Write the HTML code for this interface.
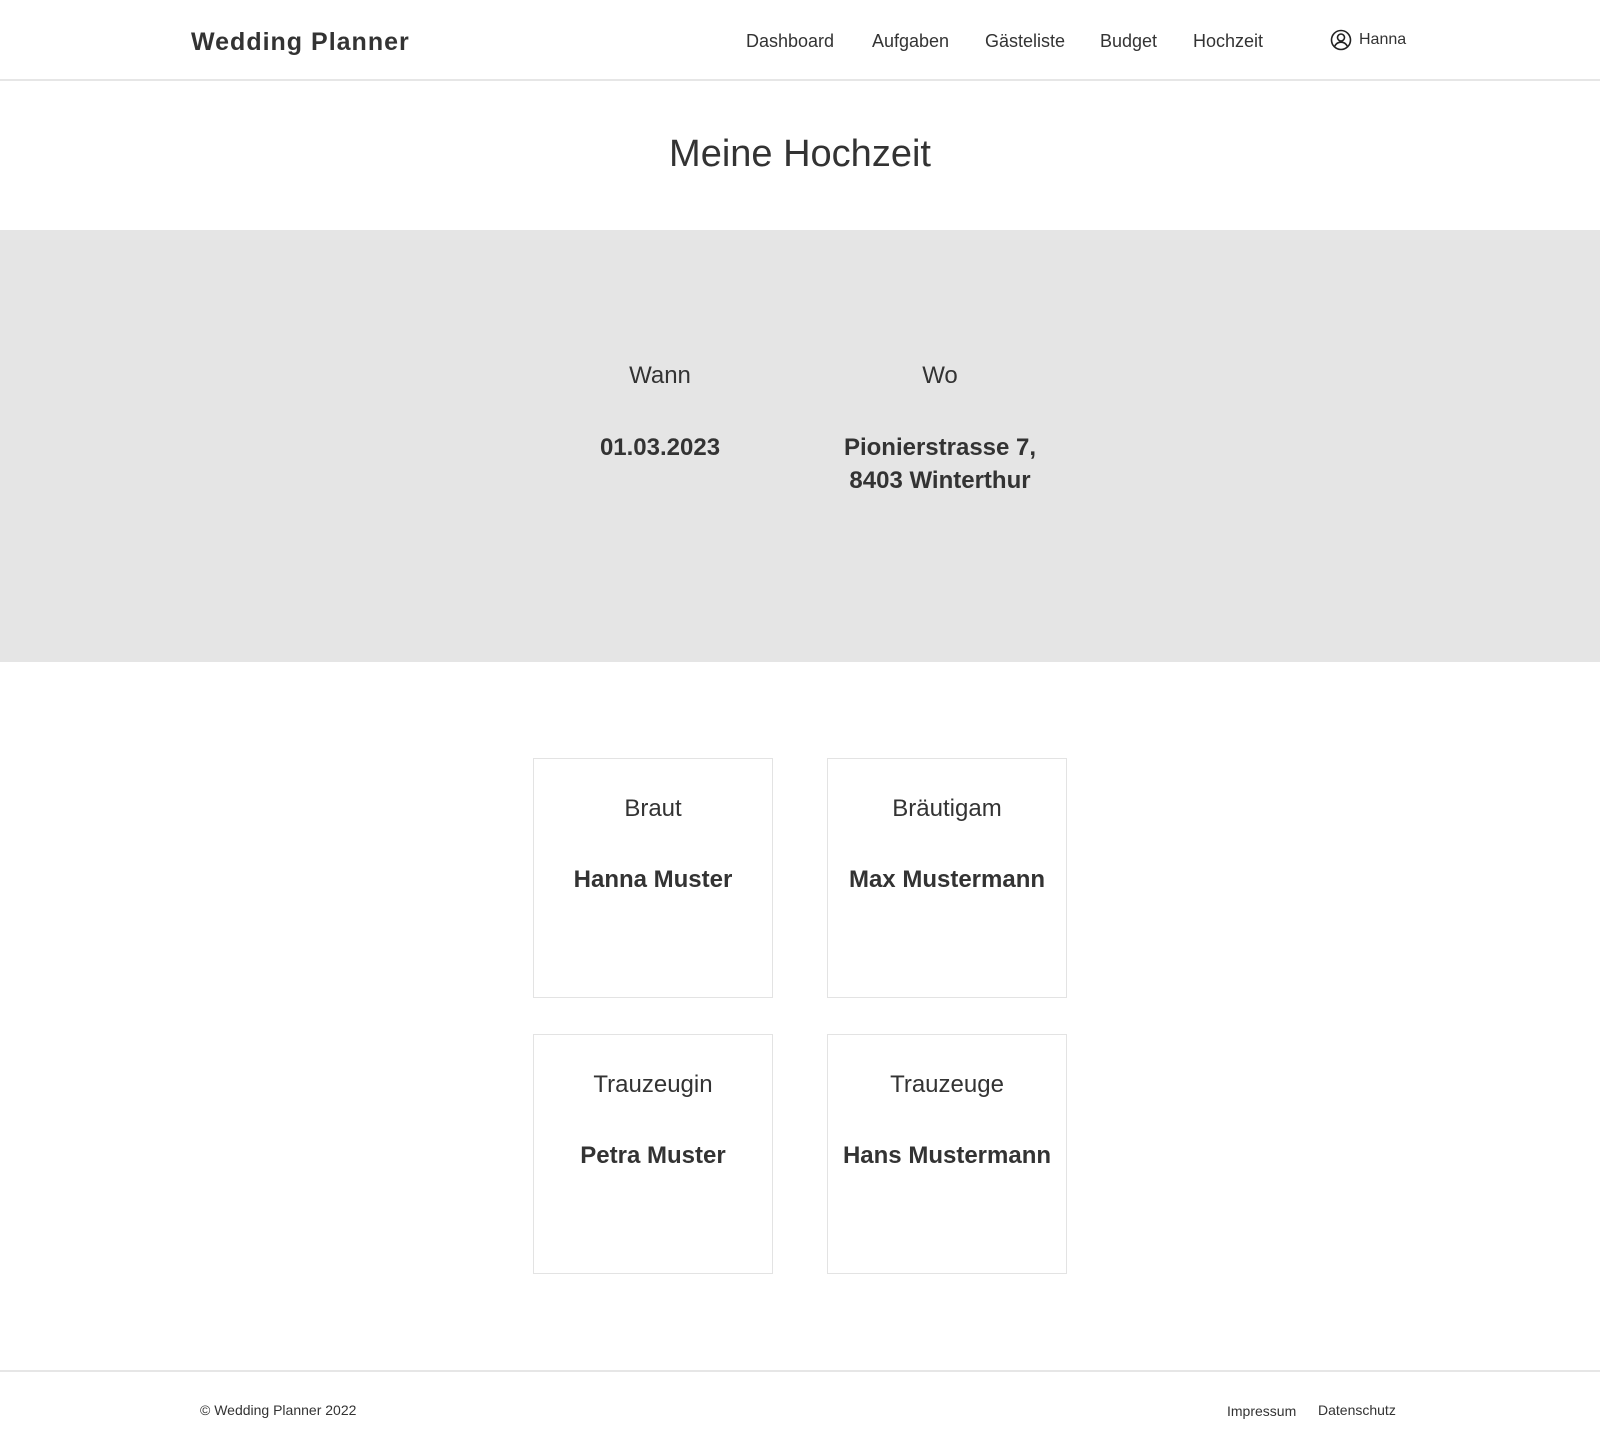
<!DOCTYPE html>
<html><head><meta charset="utf-8">
<style>
*{margin:0;padding:0;box-sizing:border-box}
body{width:1600px;height:1452px;background:#fff;font-family:"Liberation Sans",sans-serif;color:#333;position:relative;overflow:hidden}
.a{position:absolute;white-space:nowrap}
.c{transform:translateX(-50%);text-align:center}
header{position:absolute;left:0;top:0;width:1600px;height:81px;border-bottom:2px solid #e6e6e6}
.logo{left:191px;top:28px;font-size:25px;font-weight:bold;letter-spacing:1px;color:#333}
.nav{top:31px;font-size:18px;color:#333}
.band{position:absolute;left:0;top:230px;width:1600px;height:432px;background:#e5e5e5}
.lbl{font-size:24px}
.val{font-size:24px;font-weight:bold;line-height:33px}
.card{position:absolute;width:240px;height:240px;border:1px solid #e3e3e3}
.card .l{position:absolute;left:0;right:0;top:36px;text-align:center;font-size:24px}
.card .n{position:absolute;left:0;right:0;top:107px;text-align:center;font-size:24px;font-weight:bold}
.foot{position:absolute;left:0;top:1370px;width:1600px;border-top:2px solid #e6e6e6}
.ft{font-size:14px;top:1402px}
</style></head><body>
<header></header>
<div class="a logo">Wedding Planner</div>
<div class="a nav" style="left:746px">Dashboard</div>
<div class="a nav" style="left:872px">Aufgaben</div>
<div class="a nav" style="left:985px">Gästeliste</div>
<div class="a nav" style="left:1100px">Budget</div>
<div class="a nav" style="left:1193px">Hochzeit</div>
<svg class="a" style="left:1330px;top:29px" width="22" height="22" viewBox="0 0 22 22" fill="none" stroke="#222" stroke-width="1.6"><circle cx="11" cy="11" r="9.5"/><circle cx="11" cy="8.5" r="3.5"/><path d="M4.5 17.5c1.5-3 3.8-4.3 6.5-4.3s5 1.3 6.5 4.3"/></svg>
<div class="a" style="left:1359px;top:31px;font-size:16px">Hanna</div>

<div class="a c" style="left:800px;top:133px;font-size:38px">Meine Hochzeit</div>

<div class="band"></div>
<div class="a c lbl" style="left:660px;top:362px">Wann</div>
<div class="a c lbl" style="left:940px;top:362px">Wo</div>
<div class="a c val" style="left:660px;top:431px">01.03.2023</div>
<div class="a c val" style="left:940px;top:431px">Pionierstrasse 7,<br>8403 Winterthur</div>

<div class="card" style="left:533px;top:758px"><div class="l">Braut</div><div class="n">Hanna Muster</div></div>
<div class="card" style="left:827px;top:758px"><div class="l">Bräutigam</div><div class="n">Max Mustermann</div></div>
<div class="card" style="left:533px;top:1034px"><div class="l">Trauzeugin</div><div class="n">Petra Muster</div></div>
<div class="card" style="left:827px;top:1034px"><div class="l">Trauzeuge</div><div class="n">Hans Mustermann</div></div>

<div class="foot"></div>
<div class="a ft" style="left:200px">© Wedding Planner 2022</div>
<div class="a ft" style="left:1227px;top:1403px">Impressum</div>
<div class="a ft" style="left:1318px">Datenschutz</div>
</body></html>
